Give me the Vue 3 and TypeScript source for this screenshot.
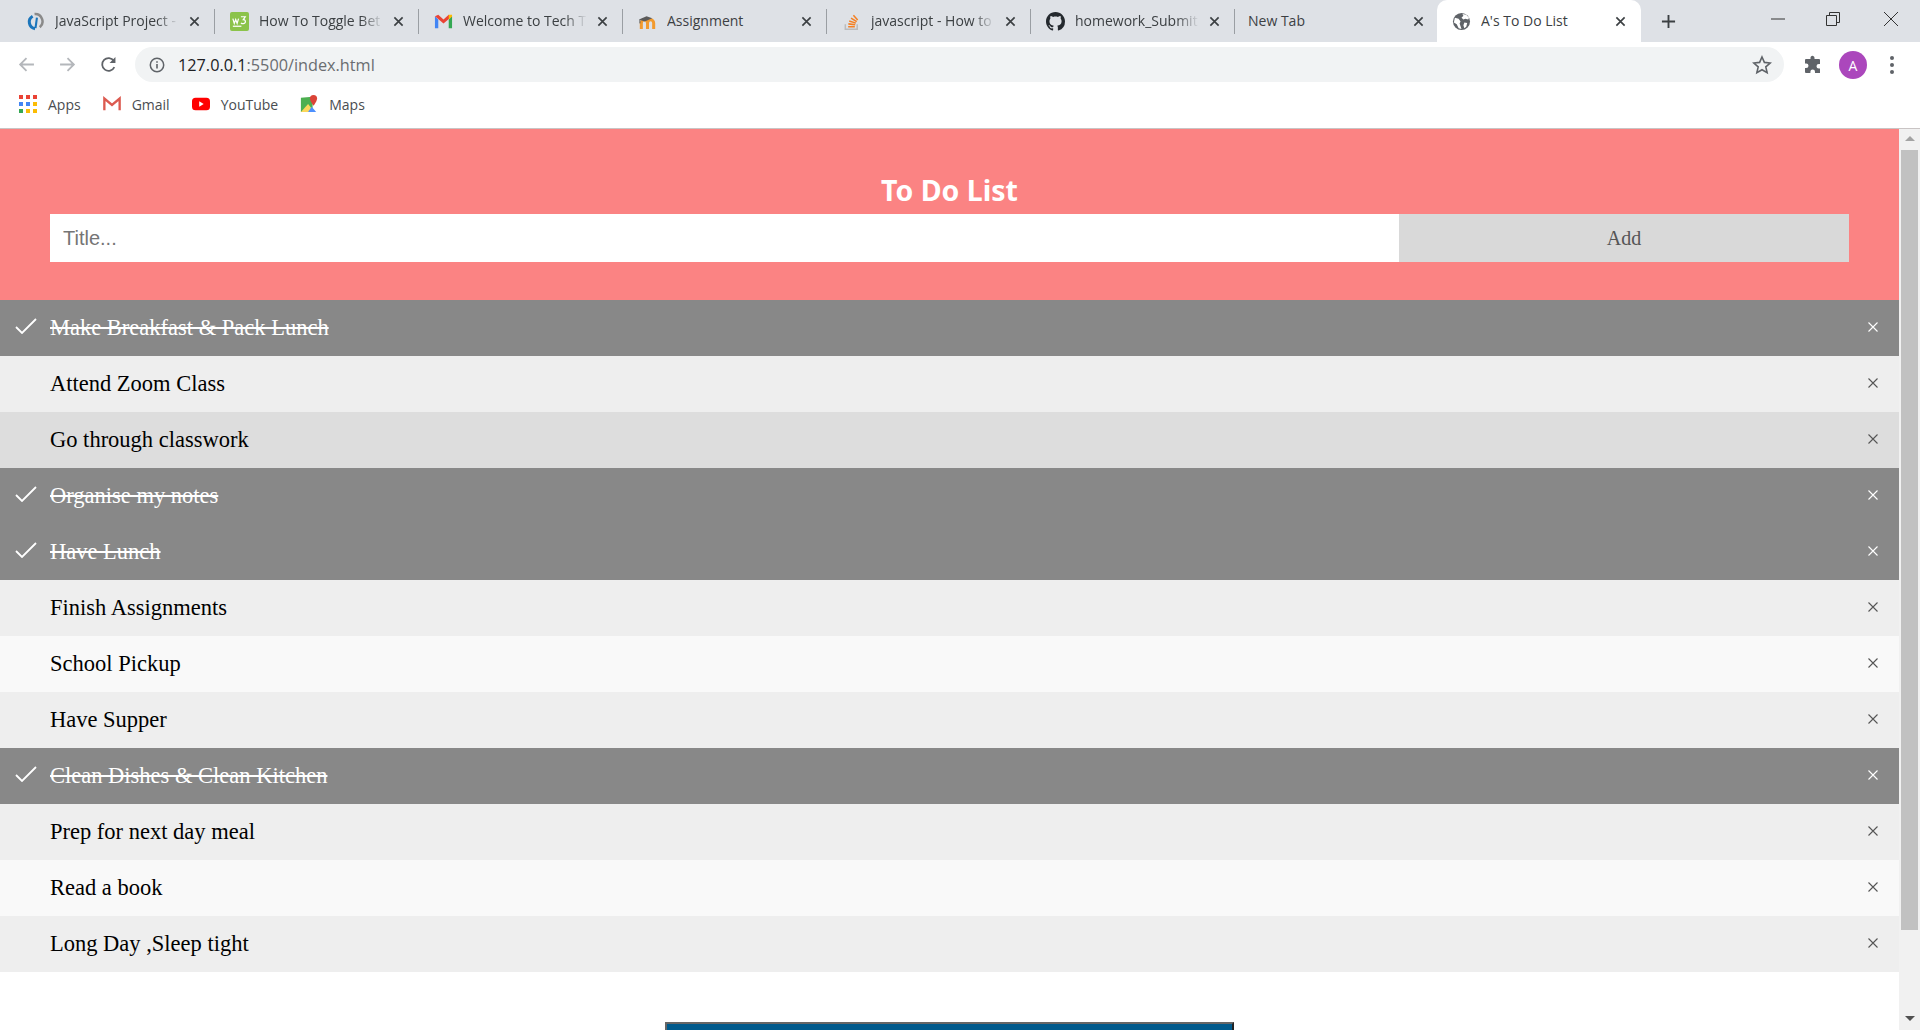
<script setup lang="ts">
const tabs = [
  { id: 1, title: 'JavaScript Project -', icon: 'js', fade: true },
  { id: 2, title: 'How To Toggle Bet', icon: 'w3', fade: true },
  { id: 3, title: 'Welcome to Tech T', icon: 'gmail', fade: true },
  { id: 4, title: 'Assignment', icon: 'moodle', fade: false },
  { id: 5, title: 'javascript - How to', icon: 'so', fade: true },
  { id: 6, title: 'homework_Submit', icon: 'github', fade: true },
  { id: 7, title: 'New Tab', icon: '', fade: false },
]

const todos = [
  { id: 1, text: 'Make Breakfast & Pack Lunch', done: true, tone: '' },
  { id: 2, text: 'Attend Zoom Class', done: false, tone: 'mid' },
  { id: 3, text: 'Go through classwork', done: false, tone: 'dark' },
  { id: 4, text: 'Organise my notes', done: true, tone: '' },
  { id: 5, text: 'Have Lunch', done: true, tone: '' },
  { id: 6, text: 'Finish Assignments', done: false, tone: 'mid' },
  { id: 7, text: 'School Pickup', done: false, tone: 'light' },
  { id: 8, text: 'Have Supper', done: false, tone: 'mid' },
  { id: 9, text: 'Clean Dishes & Clean Kitchen', done: true, tone: '' },
  { id: 10, text: 'Prep for next day meal', done: false, tone: 'mid' },
  { id: 11, text: 'Read a book', done: false, tone: 'light' },
  { id: 12, text: 'Long Day ,Sleep tight', done: false, tone: 'mid' },
]
</script>

<template>
  <div class="window">
    <!-- tab strip -->
    <div class="tabstrip">
      <div v-for="tab in tabs" :key="tab.id" class="tab" :class="{ 'no-icon': !tab.icon }">
        <svg v-if="tab.icon === 'js'" class="favicon" viewBox="0 0 20 20">
          <path d="M9 2.200A7.800 7.800 0 0 1 14.500 16" fill="none" stroke="#8a8a8a" stroke-width="2.6" />
          <path d="M7 4.500A7 7 0 0 0 9.500 17.500" fill="none" stroke="#1b75bb" stroke-width="3.2" />
          <path d="M11.500 6 10 17" fill="none" stroke="#1b75bb" stroke-width="2.2" />
        </svg>
        <svg v-else-if="tab.icon === 'w3'" class="favicon" viewBox="0 0 20 20">
          <rect width="20" height="20" rx="2" fill="#8bc34a" />
          <path d="M3 7l1.500 5 1.500-4 1.500 4L9 7M11.500 5H16l-2 3c2 0 2.600 1.400 2 3-.6 1.500-3 1.700-4.500.5" fill="none" stroke="#fff" stroke-width="1.3" />
          <path d="M3 15h9" stroke="#fff" stroke-width="1.3" />
        </svg>
        <svg v-else-if="tab.icon === 'gmail'" class="favicon" viewBox="0 0 20 20">
          <path d="M1 4.500V17h3.500V8z" fill="#4285f4" />
          <path d="M15.500 8v9H19V4.500z" fill="#34a853" />
          <path d="M1 4.500 4.500 3 10 8l5.500-5L19 4.500 10 12z" fill="#ea4335" />
          <path d="M15.500 3 19 2.800v2L15.500 8z" fill="#fbbc04" />
        </svg>
        <svg v-else-if="tab.icon === 'moodle'" class="favicon" viewBox="0 0 20 20">
          <path d="M3.500 18v-6.500a2.800 2.800 0 0 1 6.500 0V18M10 11.500a3 3 0 0 1 6.500 0V18" fill="none" stroke="#f29a2e" stroke-width="3.2" />
          <path d="M1 8l8-3.500 6 2-8 3.500z" fill="#5a5a5a" />
          <path d="M2 8v4" stroke="#5a5a5a" stroke-width="1" />
        </svg>
        <svg v-else-if="tab.icon === 'so'" class="favicon" viewBox="0 0 20 20">
          <path d="M3.500 13v5.200h12.500V13" fill="none" stroke="#bcbbbb" stroke-width="1.6" />
          <path d="M6.500 15.500h7M6.700 12.500l7.200.8M7.600 9.500l7 2.200M9.500 6.500l6 3.700M12 3.500l4.500 5" fill="none" stroke="#f48024" stroke-width="1.6" />
        </svg>
        <svg v-else-if="tab.icon === 'github'" class="favicon" viewBox="0 0 16 16">
          <path fill="#24292e" d="M8 0C3.580 0 0 3.580 0 8c0 3.540 2.290 6.530 5.470 7.590.4.070.55-.17.55-.38 0-.19-.01-.82-.01-1.490-2.010.37-2.530-.49-2.690-.94-.09-.23-.48-.94-.82-1.130-.28-.15-.68-.52-.01-.53.630-.01 1.080.58 1.230.82.720 1.210 1.870.87 2.330.66.070-.52.280-.87.510-1.070-1.780-.2-3.640-.89-3.640-3.950 0-.87.310-1.590.820-2.150-.08-.2-.36-1.020.08-2.120 0 0 .67-.21 2.200.82.640-.18 1.320-.27 2-.27s1.360.09 2 .27c1.530-1.040 2.200-.82 2.200-.82.440 1.100.160 1.920.08 2.120.51.560.82 1.270.82 2.150 0 3.070-1.870 3.750-3.650 3.950.290.250.540.730.540 1.480 0 1.070-.01 1.930-.01 2.200 0 .210.150.460.550.380A8.010 8.010 0 0 0 16 8c0-4.420-3.580-8-8-8z" />
        </svg>
        <span class="tab-title" :class="{ fade: tab.fade }">{{ tab.title }}</span>
        <svg class="tab-close" viewBox="0 0 12 12"><path d="M1.500 1.500l9 9M10.500 1.500l-9 9" stroke="#3c4043" stroke-width="1.8" /></svg>
      </div>
      <div class="tab active">
        <svg class="favicon" viewBox="0 0 20 20">
          <circle cx="10" cy="10" r="9" fill="#5f6368" />
          <path d="M3 6l4 1 2 3-1 2 1 3 1 3-3-1-2-4-3-2zM11 2l1 2-2 2 2 2 2-1 3 1 1-2-3-3zM13 11l3 .5-1 4-2 1.500-1-3z" fill="#fff" />
        </svg>
        <span class="tab-title">A's To Do List</span>
        <svg class="tab-close" viewBox="0 0 12 12"><path d="M1.500 1.500l9 9M10.500 1.500l-9 9" stroke="#3c4043" stroke-width="1.8" /></svg>
      </div>
      <svg class="new-tab" viewBox="0 0 16 16"><path d="M8 1v14M1 8h14" stroke="#3c4043" stroke-width="2" /></svg>
      <div class="win-controls">
        <svg class="minimise" viewBox="0 0 14 14"><path d="M0 7h14" stroke="#333" stroke-width="1" /></svg>
        <svg viewBox="0 0 14 14"><path d="M.5 3.500h10v10H.5zM3.500 3.500v-3h10v10h-3" fill="none" stroke="#333" stroke-width="1" /></svg>
        <svg viewBox="0 0 14 14"><path d="M0 0l14 14M14 0L0 14" stroke="#333" stroke-width="1" /></svg>
      </div>
    </div>

    <!-- address bar -->
    <div class="toolbar">
      <svg class="nav-btn" viewBox="0 0 16 16"><path d="M15 8H2M8 2L2 8l6 6" fill="none" stroke="#b4b7bb" stroke-width="1.7" /></svg>
      <svg class="nav-btn" viewBox="0 0 16 16"><path d="M1 8h13M8 2l6 6-6 6" fill="none" stroke="#b4b7bb" stroke-width="1.7" /></svg>
      <svg class="nav-btn" viewBox="0 0 16 16"><path d="M13.500 10.500A6 6 0 1 1 13 4.500" fill="none" stroke="#5f6368" stroke-width="1.7" /><path d="M14.500 1v5.500H9z" fill="#5f6368" /></svg>
      <div class="omnibox">
        <svg class="info" viewBox="0 0 16 16"><circle cx="8" cy="8" r="6.700" fill="none" stroke="#5f6368" stroke-width="1.5" /><path d="M8 7v4.500M8 4.200v1.600" stroke="#5f6368" stroke-width="1.6" /></svg>
        <span class="url"><b>127.0.0.1</b>:5500/index.html</span>
        <svg class="star" viewBox="0 0 20 20"><path d="M10 2l2.400 5.400 5.800.6-4.400 3.900 1.300 5.800-5.100-3-5.100 3 1.300-5.800L1.800 8l5.800-.6z" fill="none" stroke="#5f6368" stroke-width="1.6" /></svg>
      </div>
      <svg class="puzzle" viewBox="0 0 20 20"><path fill="#5f6368" d="M8 1.500a2 2 0 0 1 3.500 1.300V4H16a1 1 0 0 1 1 1v4h-1.200a2.300 2.300 0 0 0 0 4.600H17V18H12v-1.200a2.300 2.300 0 0 0-4.600 0V18H3a1 1 0 0 1-1-1v-4h1.200a2.300 2.300 0 0 0 0-4.600H2V5a1 1 0 0 1 1-1h4.500V2.800c0-.5.100-.9.500-1.300z" /></svg>
      <div class="avatar">A</div>
      <div class="kebab"><i></i><i></i><i></i></div>
    </div>

    <!-- bookmarks -->
    <div class="bookmarks">
      <div class="bookmark">
        <svg class="bm-icon" viewBox="0 0 18 18">
          <g fill="#ea4335"><rect x="0" y="0" width="4" height="4" /><rect x="7" y="0" width="4" height="4" /><rect x="14" y="0" width="4" height="4" /></g>
          <g fill="#4285f4"><rect x="0" y="7" width="4" height="4" /><rect x="7" y="7" width="4" height="4" /></g>
          <rect x="14" y="7" width="4" height="4" fill="#fbbc04" />
          <g fill="#34a853"><rect x="0" y="14" width="4" height="4" /></g>
          <g fill="#fbbc04"><rect x="7" y="14" width="4" height="4" /><rect x="14" y="14" width="4" height="4" /></g>
        </svg>
        Apps
      </div>
      <div class="bookmark">
        <svg class="bm-icon" viewBox="0 0 20 18"><path d="M1.500 16V3l8.500 7 8.500-7v13" fill="none" stroke="#dc5a50" stroke-width="2.6" /></svg>
        Gmail
      </div>
      <div class="bookmark">
        <svg class="bm-icon" viewBox="0 0 20 16"><rect y="1" width="20" height="14" rx="4" fill="#f00" /><path d="M8 5l5 3-5 3z" fill="#fff" /></svg>
        YouTube
      </div>
      <div class="bookmark">
        <svg class="bm-icon" viewBox="0 0 20 20">
          <path d="M1 3l13-1v17H1z" fill="#4caf50" />
          <path d="M1 19l8-9 7 9z" fill="#fbd75b" />
          <path d="M9 19l4-6 5 6z" fill="#4d90fe" />
          <path d="M15 0a4 4 0 0 1 4 4c0 3-4 8-4 8s-4-5-4-8a4 4 0 0 1 4-4z" fill="#db4437" />
        </svg>
        Maps
      </div>
    </div>

    <!-- page + scrollbar -->
    <div class="viewport">
      <main class="page">
        <header class="todo-header">
          <h2>To Do List</h2>
          <div class="add-row">
            <input type="text" placeholder="Title..." />
            <button type="button">Add</button>
          </div>
        </header>

        <ul class="todo-list">
          <li v-for="todo in todos" :key="todo.id" :class="[todo.tone, { checked: todo.done }]">
            <span class="check">
              <svg v-if="todo.done" viewBox="0 0 22 16"><path d="M1 9l6 6L21 1" fill="none" stroke="#fff" stroke-width="1.8" /></svg>
            </span>
            <span class="todo-text">{{ todo.text }}</span>
            <span class="remove">
              <svg viewBox="0 0 10 10"><path d="M.5.500l9 9M9.500.500l-9 9" stroke="currentColor" stroke-width="1.1" /></svg>
            </span>
          </li>
        </ul>

        <div class="banner"></div>
      </main>
      <div class="scrollbar">
        <span class="arrow up"></span>
        <div class="thumb"></div>
        <span class="arrow down"></span>
      </div>
    </div>
  </div>
</template>

<style>
html, body {
  margin: 0;
  overflow: hidden;
}
</style>

<style scoped>
.window {
  height: 1030px;
  width: 1920px;
  overflow: hidden;
  display: flex;
  flex-direction: column;
  background: #fff;
  font-family: "Open Sans", "Liberation Sans", sans-serif;
}

.tabstrip {
  height: 42px;
  flex: none;
  display: flex;
  align-items: stretch;
  background: #dee1e6;
  padding-left: 11px;
  box-sizing: border-box;
}

.tab {
  width: 204px;
  flex: none;
  box-sizing: border-box;
  display: flex;
  align-items: center;
  padding: 0 15px 0 15px;
  gap: 10px;
  position: relative;
  font-size: 14px;
  color: #3c4043;
}

.tab.no-icon {
  padding-left: 13px;
}

.tab::after {
  content: '';
  position: absolute;
  right: 0;
  top: 9px;
  bottom: 8px;
  width: 1px;
  background: #9a9ea3;
}

.tab.no-icon::after,
.tab.active::after {
  display: none;
}

.tab.active {
  background: #fff;
  border-radius: 10px 10px 0 0;
  margin-left: -2px;
}

.favicon {
  width: 19px;
  height: 19px;
  flex: none;
}

.tab-title {
  flex: 1;
  min-width: 0;
  margin-top: -2px;
  white-space: nowrap;
  overflow: hidden;
}

.tab-title.fade {
  -webkit-mask-image: linear-gradient(90deg, #000 82%, transparent);
  mask-image: linear-gradient(90deg, #000 82%, transparent);
}

.tab-close {
  width: 11px;
  height: 11px;
  flex: none;
}

.new-tab {
  width: 15px;
  height: 15px;
  align-self: center;
  margin-left: 20px;
  flex: none;
}

.win-controls {
  margin-left: auto;
  display: flex;
  align-items: center;
  gap: 44px;
  padding: 0 22px 5px 0;
}

.win-controls svg {
  width: 14px;
  height: 14px;
}

.win-controls .minimise {
  margin-right: -3px;
}

.toolbar {
  height: 44px;
  flex: none;
  display: flex;
  align-items: flex-start;
  padding: 5px 0 0 18px;
  box-sizing: border-box;
  background: #fff;
}

.nav-btn {
  width: 17px;
  height: 17px;
  margin: 9px 24px 0 0;
  flex: none;
}

.omnibox {
  width: 1649px;
  height: 35px;
  margin-left: -6px;
  flex: none;
  border-radius: 18px;
  background: #f1f3f4;
  display: flex;
  align-items: center;
  padding: 0 12px 0 14px;
  box-sizing: border-box;
}

.info {
  width: 16px;
  height: 16px;
  flex: none;
}

.url {
  margin-left: 13px;
  font-size: 16.25px;
  color: #6a6d71;
  flex: 1;
}

.url b {
  font-weight: 400;
  color: #202124;
}

.star {
  width: 20px;
  height: 20px;
  flex: none;
}

.puzzle {
  width: 20px;
  height: 20px;
  margin: 8px 0 0 19px;
  flex: none;
}

.avatar {
  width: 28px;
  height: 28px;
  margin: 4px 0 0 16px;
  flex: none;
  border-radius: 50%;
  background: #ab47bc;
  color: #fff;
  font-size: 14px;
  display: flex;
  align-items: center;
  justify-content: center;
}

.kebab {
  display: flex;
  flex-direction: column;
  gap: 3px;
  margin: 9px 0 0 23px;
}

.kebab i {
  width: 4px;
  height: 4px;
  border-radius: 50%;
  background: #5f6368;
}

.bookmarks {
  height: 43px;
  flex: none;
  display: flex;
  align-items: center;
  gap: 22px;
  padding: 0 0 6px 19px;
  box-sizing: border-box;
  background: #fff;
  border-bottom: 1px solid #c9c4c4;
  font-size: 14px;
  color: #4a4d51;
}

.bookmark {
  display: flex;
  align-items: center;
  gap: 11px;
}

.bm-icon {
  width: 18px;
  height: 18px;
  flex: none;
}

.viewport {
  flex: 1;
  min-height: 0;
  display: flex;
}

.page {
  flex: 1;
  min-width: 0;
  overflow: hidden;
  background: #fff;
}

.todo-header {
  background: #fb8383;
  padding: 41px 50px 38px;
  text-align: center;
  color: #fff;
}

.todo-header h2 {
  margin: 0 0 4px;
  font-family: "Noto Sans", sans-serif;
  font-size: 28.5px;
  line-height: 40px;
  font-weight: 700;
}

.add-row {
  display: flex;
  height: 48px;
}

.add-row input {
  flex: 1;
  min-width: 0;
  border: none;
  outline: none;
  border-radius: 0;
  padding: 0 13px;
  font-family: "Liberation Sans", Arial, sans-serif;
  font-size: 20px;
  background: #fff;
}

.add-row input::placeholder {
  color: #757575;
}

.add-row button {
  width: 450px;
  flex: none;
  border: none;
  border-radius: 0;
  background: #d9d9d9;
  color: #555;
  font-family: "Liberation Serif", "Times New Roman", serif;
  font-size: 20px;
}

.todo-list {
  list-style: none;
  margin: 0;
  padding: 0;
  font-family: "Liberation Serif", "Times New Roman", serif;
  font-size: 22.5px;
  color: #000;
}

.todo-list li {
  height: 56px;
  display: flex;
  align-items: center;
  background: #eee;
}

.todo-list li.mid { background: #eee; }
.todo-list li.light { background: #f9f9f9; }
.todo-list li.dark { background: #ddd; }

.todo-list li.checked {
  background: #888;
  color: #fff;
}

.todo-list li.checked .todo-text {
  text-decoration: line-through;
}

.check {
  width: 50px;
  flex: none;
  display: flex;
  justify-content: flex-end;
  padding-right: 13px;
  box-sizing: border-box;
}

.check svg {
  width: 22px;
  height: 16px;
  margin-top: -4px;
}

.todo-text {
  flex: 1;
  min-width: 0;
  margin-top: -1px;
}

.remove {
  width: 52px;
  flex: none;
  display: flex;
  justify-content: center;
  margin-top: -2px;
  color: #555;
}

.checked .remove {
  color: #fff;
}

.remove svg {
  width: 10px;
  height: 10px;
}

.banner {
  width: 569px;
  height: 300px;
  margin: 50px auto 0;
  box-sizing: border-box;
  background: #005a8c;
  border: 2px solid;
  border-color: #666 #222 #222 #666;
}

.scrollbar {
  width: 21px;
  flex: none;
  background: #f1f1f1;
  display: flex;
  flex-direction: column;
  align-items: center;
  box-sizing: border-box;
  padding-top: 7px;
}

.arrow {
  width: 0;
  height: 0;
  border-left: 5px solid transparent;
  border-right: 5px solid transparent;
  flex: none;
}

.arrow.up {
  border-bottom: 5px solid #a3a3a3;
}

.arrow.down {
  border-top: 5px solid #505050;
  margin-top: 86px;
}

.thumb {
  width: 17px;
  height: 780px;
  background: #c1c1c1;
  margin-top: 9px;
  flex: none;
}
</style>
